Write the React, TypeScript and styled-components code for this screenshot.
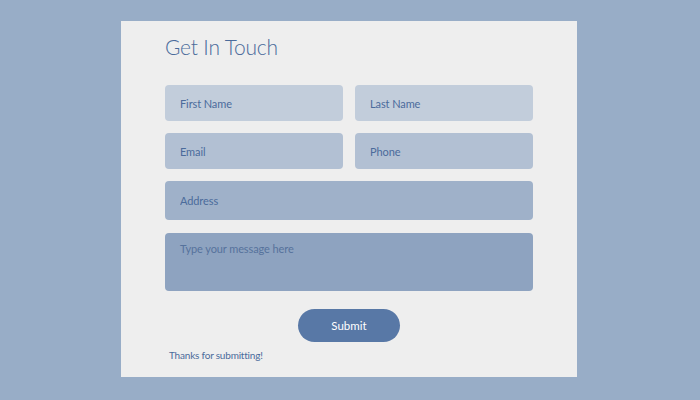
import React from 'react';
import styled, { createGlobalStyle } from 'styled-components';

const GlobalStyle = createGlobalStyle`
  html, body {
    margin: 0;
    padding: 0;
    background-color: #98adc7;
    font-family: Lato, "Open Sans", sans-serif;
  }
`;

const Page = styled.div`
  width: 700px;
  height: 400px;
  padding-top: 21px;
  box-sizing: border-box;
`;

const Card = styled.form`
  width: 456px;
  height: 356px;
  margin: 0 0 0 121px;
  background-color: #eeeeee;
  box-sizing: border-box;
  padding: 11px 44px 0 44px;
  display: flex;
  flex-direction: column;
`;

const Title = styled.h1`
  margin: 0;
  font-size: 21px;
  font-weight: 300;
  color: #4b6b9b;
  letter-spacing: -0.2px;
  line-height: 30px;
`;

const Fields = styled.div`
  margin-top: 23px;
  display: grid;
  grid-template-columns: minmax(0, 1fr) minmax(0, 1fr);
  column-gap: 12px;
  row-gap: 12px;
`;

const Field = styled.input<{ $bg: string; $height: number; $wide?: boolean }>`
  grid-column: ${p => (p.$wide ? '1 / span 2' : 'auto')};
  width: 100%;
  min-width: 0;
  height: ${p => p.$height}px;
  background-color: ${p => p.$bg};
  border: none;
  border-radius: 4px;
  padding: 0 15px;
  box-sizing: border-box;
  font-family: Lato, "Open Sans", sans-serif;
  font-size: 11px;
  letter-spacing: -0.1px;
  color: #4b6b9b;
  outline: none;

  &::placeholder {
    color: #4b6b9b;
    opacity: 1;
  }
`;

const Message = styled.textarea`
  grid-column: 1 / span 2;
  width: 100%;
  height: 58px;
  margin-top: 1px;
  background-color: #8ea3c0;
  border: none;
  border-radius: 4px;
  padding: 9px 15px;
  box-sizing: border-box;
  resize: none;
  font-family: Lato, "Open Sans", sans-serif;
  font-size: 11px;
  letter-spacing: -0.1px;
  color: #56729c;
  outline: none;

  &::placeholder {
    color: #56729c;
    opacity: 1;
  }
`;

const Actions = styled.div`
  display: flex;
  justify-content: center;
  margin-top: 18px;
`;

const SubmitButton = styled.button`
  width: 102px;
  height: 33px;
  border: none;
  border-radius: 17px;
  background-color: #5878a6;
  color: #ffffff;
  font-family: Lato, "Open Sans", sans-serif;
  font-size: 11.5px;
  cursor: pointer;
`;

const Thanks = styled.p`
  margin: 7px 0 0 4px;
  font-size: 10px;
  letter-spacing: -0.2px;
  color: #4b6b9b;
`;

export default function App() {
  return (
    <>
      <GlobalStyle />
      <Page>
        <Card onSubmit={e => e.preventDefault()}>
          <Title>Get In Touch</Title>
          <Fields>
            <Field $bg="#c2cddb" $height={36} placeholder="First Name" />
            <Field $bg="#c2cddb" $height={36} placeholder="Last Name" />
            <Field $bg="#b2c0d3" $height={36} placeholder="Email" />
            <Field $bg="#b2c0d3" $height={36} placeholder="Phone" />
            <Field $bg="#9fb1c9" $height={39} $wide placeholder="Address" />
            <Message placeholder="Type your message here" />
          </Fields>
          <Actions>
            <SubmitButton type="submit">Submit</SubmitButton>
          </Actions>
          <Thanks>Thanks for submitting!</Thanks>
        </Card>
      </Page>
    </>
  );
}
